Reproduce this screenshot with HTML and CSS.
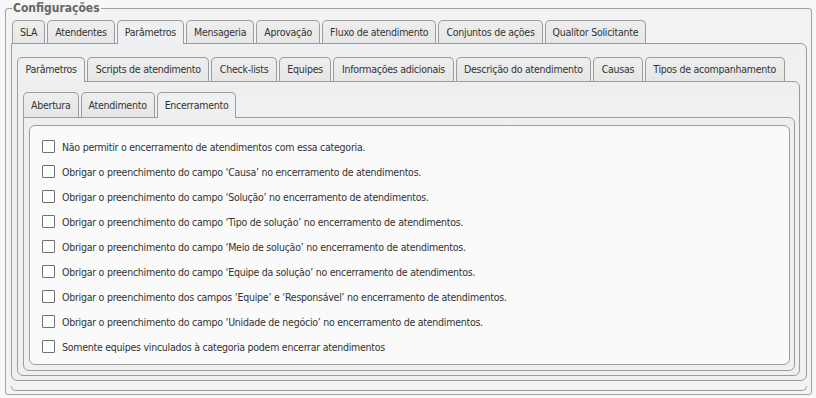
FILE: index.html
```html
<!DOCTYPE html>
<html lang="pt-BR">
<head>
<meta charset="utf-8">
<title>Configurações</title>
<link rel="stylesheet" href="styles.css">
</head>
<body>
<fieldset class="config">
  <legend class="config-legend">Configurações</legend>

  <div class="tabs tabs-l1">
    <div class="tab">SLA</div>
    <div class="tab">Atendentes</div>
    <div class="tab active">Parâmetros</div>
    <div class="tab">Mensageria</div>
    <div class="tab">Aprovação</div>
    <div class="tab">Fluxo de atendimento</div>
    <div class="tab">Conjuntos de ações</div>
    <div class="tab">Qualitor Solicitante</div>
  </div>
  <div class="panel panel-l1">
    <div class="tabs tabs-l2">
      <div class="tab active">Parâmetros</div>
      <div class="tab">Scripts de atendimento</div>
      <div class="tab">Check-lists</div>
      <div class="tab">Equipes</div>
      <div class="tab">Informações adicionais</div>
      <div class="tab">Descrição do atendimento</div>
      <div class="tab">Causas</div>
      <div class="tab">Tipos de acompanhamento</div>
    </div>
    <div class="panel panel-l2">
      <div class="tabs tabs-l3">
        <div class="tab">Abertura</div>
        <div class="tab">Atendimento</div>
        <div class="tab active">Encerramento</div>
      </div>
      <div class="panel panel-l3">
        <div class="options">
          <label class="option"><span class="box"></span>Não permitir o encerramento de atendimentos com essa categoria.</label>
          <label class="option"><span class="box"></span>Obrigar o preenchimento do campo ‘Causa’ no encerramento de atendimentos.</label>
          <label class="option"><span class="box"></span>Obrigar o preenchimento do campo ‘Solução’ no encerramento de atendimentos.</label>
          <label class="option"><span class="box"></span>Obrigar o preenchimento do campo ‘Tipo de solução’ no encerramento de atendimentos.</label>
          <label class="option"><span class="box"></span>Obrigar o preenchimento do campo ‘Meio de solução’ no encerramento de atendimentos.</label>
          <label class="option"><span class="box"></span>Obrigar o preenchimento do campo ‘Equipe da solução’ no encerramento de atendimentos.</label>
          <label class="option"><span class="box"></span>Obrigar o preenchimento dos campos ‘Equipe’ e ‘Responsável’ no encerramento de atendimentos.</label>
          <label class="option"><span class="box"></span>Obrigar o preenchimento do campo ‘Unidade de negócio’ no encerramento de atendimentos.</label>
          <label class="option"><span class="box"></span>Somente equipes vinculados à categoria podem encerrar atendimentos</label>
        </div>
      </div>
    </div>
  </div>
  <div class="footer-rule"></div>
</fieldset>
</body>
</html>
```
FILE: styles.css
```css
* { box-sizing: border-box; }

html, body {
  margin: 0;
  padding: 0;
  background: #f7f7f7;
  width: 816px;
  height: 398px;
  overflow: hidden;
}

body {
  font-family: "DejaVu Sans Condensed", "DejaVu Sans", sans-serif;
  font-size: 10.5px;
  letter-spacing: -0.25px;
  color: #333;
}

.config {
  margin: 1px 4px 0 5px;
  padding: 4px 4px 4px 5px;
  border: 1px solid #a3a3a3;
  border-radius: 3px;
  background: #f3f3f3;
  height: 394px;
  min-width: 0;
}

.config-legend {
  font-weight: bold;
  font-size: 12px;
  letter-spacing: 0;
  color: #666;
  padding: 0 1px;
  margin-left: 1px;
  line-height: 15px;
}

.tabs {
  display: flex;
  gap: 2px;
  position: relative;
  z-index: 1;
  align-items: flex-end;
}

.tab {
  border: 1px solid #9c9c9c;
  border-bottom: none;
  border-radius: 5px 5px 0 0;
  background: linear-gradient(#eeeeee, #e6e6e6);
  padding: 0 7px;
  height: 24px;
  line-height: 23px;
  white-space: nowrap;
  color: #333;
}

.tab.active {
  background: #eef0f1;
  height: 25px;
  margin-bottom: -1px;
}

.tabs-l1 { margin-left: 1px; }
.tabs-l1 .tab { height: 23px; line-height: 23px; }
.tabs-l1 .tab.active { height: 24px; }

.tabs-l2 .tab { padding: 0 7.5px; }

.tabs-l3 .tab { height: 25px; line-height: 25px; }
.tabs-l3 .tab.active { height: 26px; }

.panel {
  border: 1px solid #9c9c9c;
  border-radius: 0 6px 6px 6px;
  background: linear-gradient(#eceeef, #eef0f1 20px, #eef0f1);
}

.panel-l1 {
  padding: 13px 6px 4px 5px;
}

.panel-l2 {
  padding: 10px 4px 4px 5px;
}

.panel-l3 {
  padding: 7px 4px 5px 5px;
}

.options {
  border: 1px solid #9c9c9c;
  border-radius: 6px;
  background: #fafafa;
  padding: 8px 12px 5px 12px;
  display: flex;
  flex-direction: column;
}

.option {
  display: flex;
  align-items: center;
  gap: 7px;
  height: 25px;
  white-space: nowrap;
  color: #333;
}

.box {
  width: 13px;
  height: 13px;
  border: 1px solid #707070;
  border-radius: 1px;
  background: #fff;
  flex: none;
}

.footer-rule {
  margin-top: 5px;
  border-bottom: 1px solid #9c9c9c;
  border-left: 1px solid #9c9c9c;
  border-right: 1px solid #9c9c9c;
  border-radius: 0 0 6px 6px;
  height: 5px;
}
```
